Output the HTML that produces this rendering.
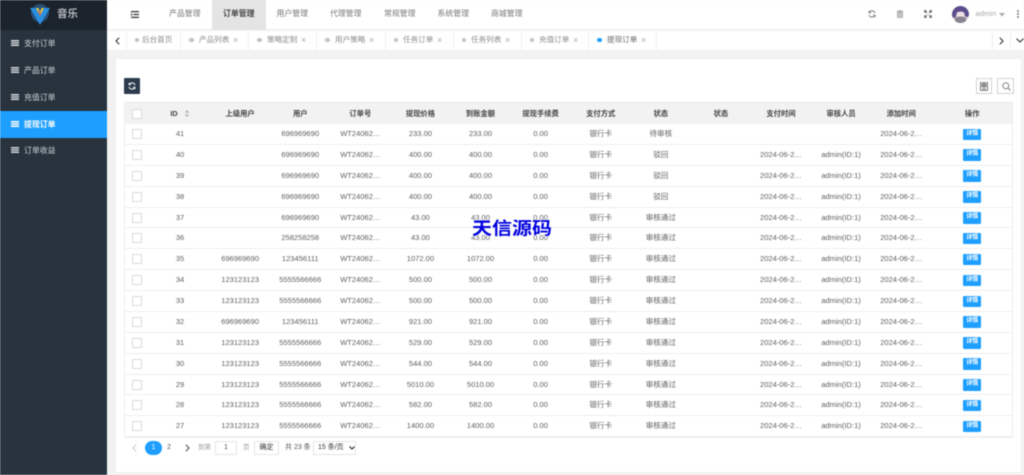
<!DOCTYPE html>
<html lang="zh"><head><meta charset="utf-8"><title>提现订单</title>
<style>
*{box-sizing:border-box;margin:0;padding:0}
html,body{width:1024px;height:475px;overflow:hidden;background:#f2f2f2}
body{font-family:"Liberation Sans","Noto Sans CJK SC",sans-serif;color:#666}
#w{position:absolute;left:0;top:0;width:1024px;height:475px;overflow:hidden;filter:blur(.42px);background:#f2f2f2}
.a{position:absolute;white-space:nowrap}
#side{left:0;top:0;width:107px;height:475px;background:#28333e}
#logo{left:0;top:0;width:107px;height:30px;background:#1b232c}
.si{position:absolute;left:0;width:107px;height:27px;line-height:27px;color:#d0d4d8;font-size:7.9px;padding-left:24px}
.si.on{background:#1e9fff;color:#fff;font-weight:bold}
.si svg{position:absolute;left:10.5px;top:10px}
#top{left:107px;top:0;width:917px;height:30px;background:#fff;border-bottom:1px solid #f2f2f2}
.n{position:absolute;top:0;width:53.5px;height:30px;line-height:28.6px;text-align:center;font-size:7.9px;color:#777}
.n.on{background:#e4e4e4;color:#444}
#tabs{left:107px;top:31px;width:917px;height:19px;background:#fff}
.d{position:absolute;top:0;width:1px;height:19px;background:#f0f0f0}
.dot{position:absolute;top:6.5px;width:4.6px;height:4.6px;border-radius:50%;background:#c2c2c2}
.t{position:absolute;top:0;line-height:18px;font-size:7.6px;color:#8a8a8a}
.x{position:absolute;top:0;line-height:18px;font-size:9px;color:#aaa}
#card{left:116px;top:59px;width:905px;height:413px;background:#fff;border-radius:2px}
#tb{left:124px;top:102px;width:889px;border-left:1px solid #eee;border-right:1px solid #eee;border-bottom:1px solid #eee}
.r{display:flex;height:20.89px;border-bottom:1px solid #eee;background:#fff;font-size:7.55px;color:#5f5f5f;line-height:20.4px;text-align:center}
.h{height:22px;background:#f2f2f2;color:#444;font-weight:bold;font-size:7.3px;line-height:21.5px;border-top:1px solid #e6e6e6;border-bottom:0}
.r>i{font-style:normal;display:block;flex:none;width:60.1px;white-space:nowrap}
.r>i:first-child{width:25px;position:relative}
.r>i:last-child{width:82px}
.cb{position:absolute;left:7px;top:5px;width:10px;height:10px;border:1px solid #d9d9d9;background:#fff;border-radius:1px}
.btn{display:block;margin:4.5px auto 0 32px;width:18px;height:11.5px;line-height:11.5px;background:#1e9fff;color:#fff;font-size:6px;border-radius:1px;text-align:center}
.b2{position:absolute;top:78px;width:16.5px;height:16px;border:1px solid #d2d2d2;background:#fff}
#wm{left:472px;top:217px;font-size:20px;line-height:24px;font-weight:bold;color:#0000e0;text-shadow:0 0 2px #fff,0 0 2px #fff;transform:scaleY(.88);transform-origin:50% 50%}
.p{position:absolute;font-size:7px;color:#999;line-height:14px;top:441px}
.bx{position:absolute;top:441px;height:14px;border:1px solid #e6e6e6;background:#fff;line-height:12px;text-align:center;font-size:7px;color:#555}
</style></head><body><div id="w">

<div class="a" id="side">
<div class="si" style="top:30px"><svg width="8" height="6"><path d="M0 .7h8M0 3h8M0 5.300h8" stroke="#d0d4d8" stroke-width="1.5"/></svg>支付订单</div>
<div class="si" style="top:57px"><svg width="8" height="6"><path d="M0 .7h8M0 3h8M0 5.300h8" stroke="#d0d4d8" stroke-width="1.5"/></svg>产品订单</div>
<div class="si" style="top:84px"><svg width="8" height="6"><path d="M0 .7h8M0 3h8M0 5.300h8" stroke="#d0d4d8" stroke-width="1.5"/></svg>充值订单</div>
<div class="si on" style="top:111px"><svg width="8" height="6"><path d="M0 .7h8M0 3h8M0 5.300h8" stroke="#fff" stroke-width="1.5"/></svg>提现订单</div>
<div class="si" style="top:137px"><svg width="8" height="6"><path d="M0 .7h8M0 3h8M0 5.300h8" stroke="#d0d4d8" stroke-width="1.5"/></svg>订单收益</div>
</div>
<div class="a" id="logo">
<svg style="position:absolute;left:30px;top:4px" width="20" height="21" viewBox="0 0 20 21"><circle cx="10" cy="9" r="9" fill="#27507a"/><path d="M0 4h6l4 8 4-8h6L10 21z" fill="#2a8fe0"/><path d="M6 4l4 8 4-8h-2.500L10 8 8.500 4z" fill="#e9c93a"/><path d="M8 6l2 6 1-3z" fill="#d0506a"/></svg>
<span class="a" style="left:57px;top:7px;font-size:10.5px;line-height:15px;font-weight:bold;color:#b8bcc0">音乐</span>
</div>

<div class="a" id="top">
<svg style="position:absolute;left:24px;top:11px" width="8" height="7"><path d="M0 .6h8M2.500 3.500h5.500M0 6.400h8" stroke="#333" stroke-width="1.300"/><path d="M0 2l1.800 1.500L0 5z" fill="#333"/></svg>
<div class="n" style="left:51px">产品管理</div>
<div class="n on" style="left:105px;font-weight:bold">订单管理</div>
<div class="n" style="left:158.5px">用户管理</div>
<div class="n" style="left:212px">代理管理</div>
<div class="n" style="left:266px">常规管理</div>
<div class="n" style="left:319.5px">系统管理</div>
<div class="n" style="left:373px">商城管理</div>
<svg style="position:absolute;left:761px;top:10px" width="8" height="8" viewBox="0 0 8 8" fill="none" stroke="#777" stroke-width="1"><path d="M7 3A3.200 3.200 0 0 0 1.200 2.500M1 5a3.200 3.200 0 0 0 5.800.5"/><path d="M1 .8v2h2M7 7.200v-2H5" stroke-width=".8"/></svg>
<svg style="position:absolute;left:789px;top:10px" width="8" height="8" viewBox="0 0 8 8"><path d="M1.500 2h5v5.500h-5zM1 1.200h6M3 .5h2" stroke="#aaa" fill="#c4c4c4" stroke-width=".8"/></svg>
<svg style="position:absolute;left:816.500px;top:10px" width="8" height="8" viewBox="0 0 8 8" fill="none" stroke="#666" stroke-width="1.100"><path d="M1 1l2 2M7 1L5 3M1 7l2-2M7 7L5 5M.7 2.600V.7h1.900M5.400.7h1.900v1.900M.7 5.400v1.900h1.900M5.400 7.300h1.900V5.400"/></svg>
<svg style="position:absolute;left:845px;top:6px" width="17" height="17" viewBox="0 0 17 17"><defs><clipPath id="av"><circle cx="8.500" cy="8.500" r="8.500"/></clipPath></defs><g clip-path="url(#av)"><rect width="17" height="17" fill="#d9d2da"/><path d="M0 0h17v9c-1 3-3 2-4 1l-1-4H5L4 10c-1 3-3 2-4 0z" fill="#5b4d8d"/><circle cx="8.500" cy="9" r="3.500" fill="#efe3e6"/><path d="M3 12c2-2 9-2 11 0v5H3z" fill="#8a8391"/></g></svg>
<span class="a" style="left:868.500px;top:7px;line-height:14px;font-size:7.600px;color:#aaa">admin</span>
<svg style="position:absolute;left:892px;top:12.500px" width="6" height="4"><path d="M0 0h6L3 3.500z" fill="#aaa"/></svg>
<svg style="position:absolute;left:910px;top:10px" width="2" height="8"><circle cx="1" cy="1" r=".9" fill="#555"/><circle cx="1" cy="4" r=".9" fill="#555"/><circle cx="1" cy="7" r=".9" fill="#555"/></svg>
</div>

<div class="a" id="tabs">
<svg style="position:absolute;left:8px;top:5.500px" width="5" height="8"><path d="M4.200.7L1 4l3.200 3.300" fill="none" stroke="#333" stroke-width="1.100"/></svg>
<div class="d" style="left:19px"></div><div class="d" style="left:73px"></div><div class="d" style="left:141px"></div><div class="d" style="left:209px"></div><div class="d" style="left:277.500px"></div><div class="d" style="left:345.500px"></div><div class="d" style="left:413.500px"></div><div class="d" style="left:481px"></div><div class="d" style="left:549px"></div><div class="d" style="left:885px"></div><div class="d" style="left:903px"></div>
<div class="dot" style="left:27.500px"></div><div class="t" style="left:35px">后台首页</div>
<div class="dot" style="left:82px"></div><div class="t" style="left:92px">产品列表</div><div class="x" style="left:126px">×</div>
<div class="dot" style="left:150px"></div><div class="t" style="left:160px">策略定制</div><div class="x" style="left:194px">×</div>
<div class="dot" style="left:218px"></div><div class="t" style="left:228px">用户策略</div><div class="x" style="left:262px">×</div>
<div class="dot" style="left:286.500px"></div><div class="t" style="left:296px">任务订单</div><div class="x" style="left:330px">×</div>
<div class="dot" style="left:354.500px"></div><div class="t" style="left:364px">任务列表</div><div class="x" style="left:398px">×</div>
<div class="dot" style="left:422.500px"></div><div class="t" style="left:432px">充值订单</div><div class="x" style="left:466px">×</div>
<div class="dot" style="left:490px;background:#1e9fff"></div><div class="t" style="left:500px;color:#666">提现订单</div><div class="x" style="left:534px">×</div>
<svg style="position:absolute;left:892px;top:5.500px" width="5" height="8"><path d="M.8.7L4 4 .8 7.300" fill="none" stroke="#333" stroke-width="1.100"/></svg>
<svg style="position:absolute;left:909px;top:7px" width="8" height="5"><path d="M.5.7L4 4 7.500.7" fill="none" stroke="#333" stroke-width="1.100"/></svg>
</div>

<div class="a" id="card"></div>
<div class="a" style="left:124px;top:78px;width:16px;height:16px;background:#2b3b4c;border-radius:1px">
<svg style="position:absolute;left:4px;top:4px" width="8" height="8" viewBox="0 0 8 8" fill="none" stroke="#fff" stroke-width="1.100"><path d="M7 3A3.200 3.200 0 0 0 1.200 2.500M1 5a3.200 3.200 0 0 0 5.800.5"/><path d="M1 .8v2h2M7 7.200v-2H5" stroke-width=".8"/></svg>
</div>
<div class="b2" style="left:975.500px"><svg style="position:absolute;left:3.500px;top:3px" width="8" height="9" viewBox="0 0 8 9" fill="none" stroke="#666" stroke-width=".9"><path d="M.5.7h3v2h-3zM4.500.7h3v2h-3zM.5 4h7M.5 4v4.300h7V4M3 4v4.300M5 4v4.300"/></svg></div>
<div class="b2" style="left:997px"><svg style="position:absolute;left:3.500px;top:3px" width="9" height="9" viewBox="0 0 9 9" fill="none" stroke="#777" stroke-width=".9"><circle cx="3.800" cy="3.800" r="3"/><path d="M6 6l2.500 2.500"/></svg></div>

<div class="a" id="tb">
<div class="r h"><i><b class="cb" style="top:6px"></b></i><i>ID <svg width="6" height="7" style="margin-left:4px;vertical-align:-1px"><path d="M3 0l2.300 2.600H.7zM3 7L.7 4.400h4.600z" fill="#b2b2b2"/></svg></i><i>上级用户</i><i>用户</i><i>订单号</i><i>提现价格</i><i>到账金额</i><i>提现手续费</i><i>支付方式</i><i>状态</i><i>状态</i><i>支付时间</i><i>审核人员</i><i>添加时间</i><i>操作</i></div>
<div class="r"><i><b class="cb"></b></i><i>41</i><i></i><i>696969690</i><i>WT24062…</i><i>233.00</i><i>233.00</i><i>0.00</i><i>银行卡</i><i>待审核</i><i></i><i></i><i></i><i>2024-06-2…</i><i><b class="btn">详情</b></i></div>
<div class="r"><i><b class="cb"></b></i><i>40</i><i></i><i>696969690</i><i>WT24062…</i><i>400.00</i><i>400.00</i><i>0.00</i><i>银行卡</i><i>驳回</i><i></i><i>2024-06-2…</i><i>admin(ID:1)</i><i>2024-06-2…</i><i><b class="btn">详情</b></i></div>
<div class="r"><i><b class="cb"></b></i><i>39</i><i></i><i>696969690</i><i>WT24062…</i><i>400.00</i><i>400.00</i><i>0.00</i><i>银行卡</i><i>驳回</i><i></i><i>2024-06-2…</i><i>admin(ID:1)</i><i>2024-06-2…</i><i><b class="btn">详情</b></i></div>
<div class="r"><i><b class="cb"></b></i><i>38</i><i></i><i>696969690</i><i>WT24062…</i><i>400.00</i><i>400.00</i><i>0.00</i><i>银行卡</i><i>驳回</i><i></i><i>2024-06-2…</i><i>admin(ID:1)</i><i>2024-06-2…</i><i><b class="btn">详情</b></i></div>
<div class="r"><i><b class="cb"></b></i><i>37</i><i></i><i>696969690</i><i>WT24062…</i><i>43.00</i><i>43.00</i><i>0.00</i><i>银行卡</i><i>审核通过</i><i></i><i>2024-06-2…</i><i>admin(ID:1)</i><i>2024-06-2…</i><i><b class="btn">详情</b></i></div>
<div class="r"><i><b class="cb"></b></i><i>36</i><i></i><i>258258258</i><i>WT24062…</i><i>43.00</i><i>43.00</i><i>0.00</i><i>银行卡</i><i>审核通过</i><i></i><i>2024-06-2…</i><i>admin(ID:1)</i><i>2024-06-2…</i><i><b class="btn">详情</b></i></div>
<div class="r"><i><b class="cb"></b></i><i>35</i><i>696969690</i><i>123456111</i><i>WT24062…</i><i>1072.00</i><i>1072.00</i><i>0.00</i><i>银行卡</i><i>审核通过</i><i></i><i>2024-06-2…</i><i>admin(ID:1)</i><i>2024-06-2…</i><i><b class="btn">详情</b></i></div>
<div class="r"><i><b class="cb"></b></i><i>34</i><i>123123123</i><i>5555566666</i><i>WT24062…</i><i>500.00</i><i>500.00</i><i>0.00</i><i>银行卡</i><i>审核通过</i><i></i><i>2024-06-2…</i><i>admin(ID:1)</i><i>2024-06-2…</i><i><b class="btn">详情</b></i></div>
<div class="r"><i><b class="cb"></b></i><i>33</i><i>123123123</i><i>5555566666</i><i>WT24062…</i><i>500.00</i><i>500.00</i><i>0.00</i><i>银行卡</i><i>审核通过</i><i></i><i>2024-06-2…</i><i>admin(ID:1)</i><i>2024-06-2…</i><i><b class="btn">详情</b></i></div>
<div class="r"><i><b class="cb"></b></i><i>32</i><i>696969690</i><i>123456111</i><i>WT24062…</i><i>921.00</i><i>921.00</i><i>0.00</i><i>银行卡</i><i>审核通过</i><i></i><i>2024-06-2…</i><i>admin(ID:1)</i><i>2024-06-2…</i><i><b class="btn">详情</b></i></div>
<div class="r"><i><b class="cb"></b></i><i>31</i><i>123123123</i><i>5555566666</i><i>WT24062…</i><i>529.00</i><i>529.00</i><i>0.00</i><i>银行卡</i><i>审核通过</i><i></i><i>2024-06-2…</i><i>admin(ID:1)</i><i>2024-06-2…</i><i><b class="btn">详情</b></i></div>
<div class="r"><i><b class="cb"></b></i><i>30</i><i>123123123</i><i>5555566666</i><i>WT24062…</i><i>544.00</i><i>544.00</i><i>0.00</i><i>银行卡</i><i>审核通过</i><i></i><i>2024-06-2…</i><i>admin(ID:1)</i><i>2024-06-2…</i><i><b class="btn">详情</b></i></div>
<div class="r"><i><b class="cb"></b></i><i>29</i><i>123123123</i><i>5555566666</i><i>WT24062…</i><i>5010.00</i><i>5010.00</i><i>0.00</i><i>银行卡</i><i>审核通过</i><i></i><i>2024-06-2…</i><i>admin(ID:1)</i><i>2024-06-2…</i><i><b class="btn">详情</b></i></div>
<div class="r"><i><b class="cb"></b></i><i>28</i><i>123123123</i><i>5555566666</i><i>WT24062…</i><i>582.00</i><i>582.00</i><i>0.00</i><i>银行卡</i><i>审核通过</i><i></i><i>2024-06-2…</i><i>admin(ID:1)</i><i>2024-06-2…</i><i><b class="btn">详情</b></i></div>
<div class="r"><i><b class="cb"></b></i><i>27</i><i>123123123</i><i>5555566666</i><i>WT24062…</i><i>1400.00</i><i>1400.00</i><i>0.00</i><i>银行卡</i><i>审核通过</i><i></i><i>2024-06-2…</i><i>admin(ID:1)</i><i>2024-06-2…</i><i><b class="btn">详情</b></i></div>
</div>

<div class="a" id="wm">天信源码</div>

<svg style="position:absolute;left:132px;top:444px" width="5" height="8"><path d="M4.200.7L1 4l3.200 3.300" fill="none" stroke="#c8c8c8" stroke-width="1"/></svg>
<div class="a" style="left:145px;top:441px;width:17px;height:14px;border-radius:7px;background:#1e9fff;color:#fff;font-size:7px;line-height:14px;text-align:center">1</div>
<div class="p" style="left:167px;color:#555">2</div>
<svg style="position:absolute;left:185px;top:444px" width="5" height="8"><path d="M.8.7L4 4 .8 7.300" fill="none" stroke="#444" stroke-width="1"/></svg>
<div class="p" style="left:198px;font-size:6.500px">到第</div>
<div class="bx" style="left:215px;width:22px;border-radius:1px">1</div>
<div class="p" style="left:243px;font-size:6.500px">页</div>
<div class="bx" style="left:254px;width:25px;color:#333">确定</div>
<div class="p" style="left:285px;color:#555;font-size:7px">共 23 条</div>
<div class="bx" style="left:313px;width:43px;text-align:left;padding-left:4px;color:#333">15 条/页
<svg style="position:absolute;left:35px;top:4px" width="6" height="4"><path d="M.5.5L3 3 5.500.5" fill="none" stroke="#222" stroke-width="1.100"/></svg></div>

</div></body></html>
